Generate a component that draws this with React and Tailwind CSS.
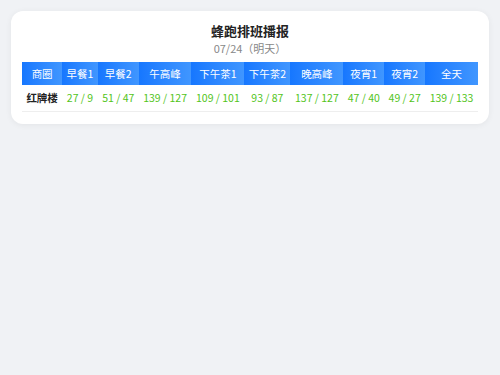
import React from "react";

const heads = ["商圈", "早餐1", "早餐2", "午高峰", "下午茶1", "下午茶2", "晚高峰", "夜宵1", "夜宵2", "全天"];
const vals = ["27 / 9", "51 / 47", "139 / 127", "109 / 101", "93 / 87", "137 / 127", "47 / 40", "49 / 27", "139 / 133"];

export default function App() {
  return (
    <div
      className="min-h-[375px] w-[500px] bg-[#f0f2f5] p-[11px]"
      style={{ fontFamily: '"Noto Sans CJK SC", "Noto Sans", sans-serif' }}
    >
      <div className="rounded-xl bg-white px-[11px] pt-[10px] pb-[12px] shadow-[0_1px_6px_rgba(0,0,0,0.06)]">
        <div className="text-center text-[13px] font-bold leading-[20px] text-[#222]">蜂跑排班播报</div>
        <div className="text-center text-[11px] leading-[14px] text-[#888]">07/24（明天）</div>
        <table className="mt-[7px] w-full border-collapse">
          <thead>
            <tr>
              {heads.map((h) => (
                <th
                  key={h}
                  className="bg-gradient-to-r from-[#1677ff] to-[#4096ff] px-[4px] py-[5px] text-center text-[10.5px] font-normal leading-[13px] whitespace-nowrap text-white"
                >
                  {h}
                </th>
              ))}
            </tr>
          </thead>
          <tbody>
            <tr className="border-b border-[#eeeeee]">
              <td className="px-[4px] py-[6px] text-center text-[10.5px] font-bold leading-[14px] whitespace-nowrap text-[#222]">红牌楼</td>
              {vals.map((v, i) => (
                <td
                  key={i}
                  className="px-[4px] py-[6px] text-center text-[10.5px] leading-[14px] whitespace-nowrap text-[#52c41a]"
                >
                  {v}
                </td>
              ))}
            </tr>
          </tbody>
        </table>
      </div>
    </div>
  );
}
